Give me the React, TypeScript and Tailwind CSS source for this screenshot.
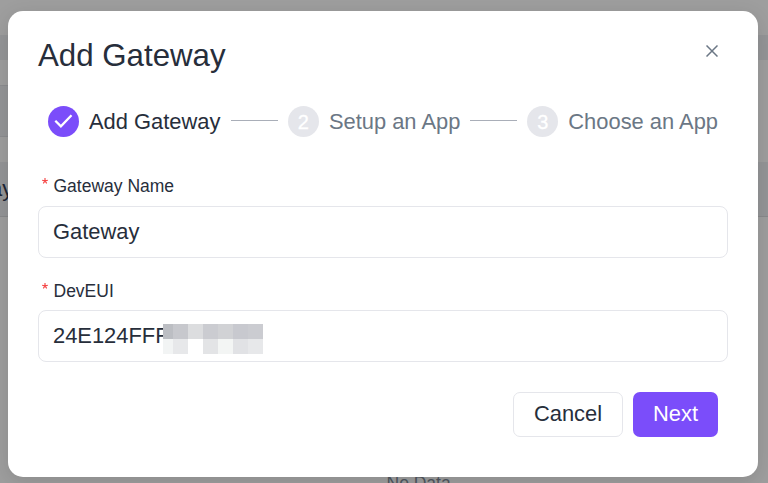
import React from 'react';

const topShades = ['bg-[#bcbec3]', 'bg-[#c7c8cd]', 'bg-[#dcdddf]', 'bg-[#cbccd1]', 'bg-[#d1d2d5]', 'bg-[#c8c9cf]', 'bg-[#cbccd1]'];
const bottomShades = ['bg-[#f2f4f4]', 'bg-[#e7e8ea]', 'bg-white', 'bg-[#e3e4e6]', 'bg-[#f3f5f4]', 'bg-[#e1e2e5]', 'bg-[#e7e8ea]'];

function MaskRow({ shades }: { shades: string[] }) {
  return (
    <div className="flex h-[15px]">
      {shades.map((shade, i) => (
        <span key={i} className={`${i === 0 ? 'w-[10px]' : 'w-[15px]'} ${shade}`} />
      ))}
    </div>
  );
}

function Step({ n, label, done }: { n: number; label: string; done?: boolean }) {
  return (
    <div className="flex shrink-0 items-center">
      <span
        className={`flex size-[31px] items-center justify-center rounded-full text-[20px] leading-none text-white [-webkit-text-stroke:0.3px_white] ${
          done ? 'bg-[#7b4dfa]' : 'bg-[#e5e6eb]'
        }`}
      >
        {done ? (
          <svg width="31" height="31" viewBox="0 0 31 31" fill="none" stroke="white" strokeWidth="2.3">
            <path d="M7.3 14.8 12.9 20.4 23.5 9.3" />
          </svg>
        ) : (
          n
        )}
      </span>
      <span className={`ml-[10px] whitespace-nowrap text-[21.9px] leading-[30px] ${done ? 'text-[#272e3b]' : 'text-[#6b7785]'}`}>
        {label}
      </span>
    </div>
  );
}

function Label({ children }: { children: string }) {
  return (
    <label className="flex h-5 items-center pl-1 text-[17.5px] leading-5 text-[#272e3b]">
      <svg className="mr-[5.5px] mb-[11px] size-[6px]" viewBox="0 0 6 6" stroke="#f53f3f" strokeWidth="1.1" fill="none">
        <path d="M3 0V3M.2 2.2 3 3 5.8 2.2M1.3 5.4 3 3 4.7 5.4" />
      </svg>
      {children}
    </label>
  );
}

export default function App() {
  return (
    <div className="relative h-[483px] w-[768px] overflow-hidden bg-[#9e9e9e] font-['Liberation_Sans',Arial,sans-serif]">
      <div className="flex h-full flex-col">
        <div className="mt-[35px] h-[25px] shrink-0 bg-[#949597]" />
        <div className="mt-[25px] h-[52px] w-10 shrink-0 border-y border-[#8b8c8f] bg-[#949597]" />
        <div className="mt-[25px] flex h-[55px] shrink-0 items-center border-b border-[#88898b] bg-[#949597]">
          <span className="-ml-[10px] text-[22px] leading-none text-[#1d2533]">ay</span>
        </div>
        <div className="mt-[256px] pl-[386.5px] text-[17.5px] leading-5 text-[#50565f]">No Data</div>
      </div>

      <section className="absolute top-[11px] left-2 flex h-[466px] w-[750px] flex-col rounded-[15px] bg-white px-[30px] shadow-[0_5px_20px_rgba(0,0,0,0.12)]">
        <header className="mt-[25px] flex h-10 shrink-0 items-center justify-between">
          <h1 className="text-[31.25px] leading-10 text-[#272e3b]">Add Gateway</h1>
          <button aria-label="Close" className="mr-[10px] mb-[10px]">
            <svg width="12" height="12" viewBox="0 0 12 12" stroke="#6b7785" strokeWidth="1.5">
              <path d="M.5.5 11.5 11.5M11.5.5.5 11.5" />
            </svg>
          </button>
        </header>

        <div className="mt-[30px] flex h-[31px] shrink-0 items-center px-[10px]">
          <Step n={1} label="Add Gateway" done />
          <span className="mr-[10px] mb-[3px] ml-[10.5px] h-px flex-1 bg-[#a9aeb8]" />
          <Step n={2} label="Setup an App" />
          <span className="mx-[10px] mb-[3px] h-px flex-1 bg-[#a9aeb8]" />
          <Step n={3} label="Choose an App" />
        </div>

        <div className="mt-[39px]">
          <Label>Gateway Name</Label>
          <div className="mt-[10px] flex h-[52px] items-center rounded-[8px] border border-[#e5e6eb] px-[14px] text-[21.9px] text-[#272e3b]">
            Gateway
          </div>
        </div>
        <div className="mt-[23px]">
          <Label>DevEUI</Label>
          <div className="relative mt-[9px] flex h-[52px] items-center rounded-[8px] border border-[#e5e6eb] px-[14px] text-[21.9px] text-[#272e3b]">
            24E124FFF
            <div className="absolute top-[13px] left-[124px]">
              <MaskRow shades={topShades} />
              <MaskRow shades={bottomShades} />
            </div>
          </div>
        </div>

        <footer className="mt-[30px] flex justify-end gap-[10px] pr-[10px] text-[21.9px]">
          <button className="h-[45px] w-[110px] rounded-[7px] border border-[#e5e6eb] text-[#272e3b]">Cancel</button>
          <button className="h-[45px] w-[85px] rounded-[7px] bg-[#7b4dfa] text-white">Next</button>
        </footer>
      </section>
    </div>
  );
}
